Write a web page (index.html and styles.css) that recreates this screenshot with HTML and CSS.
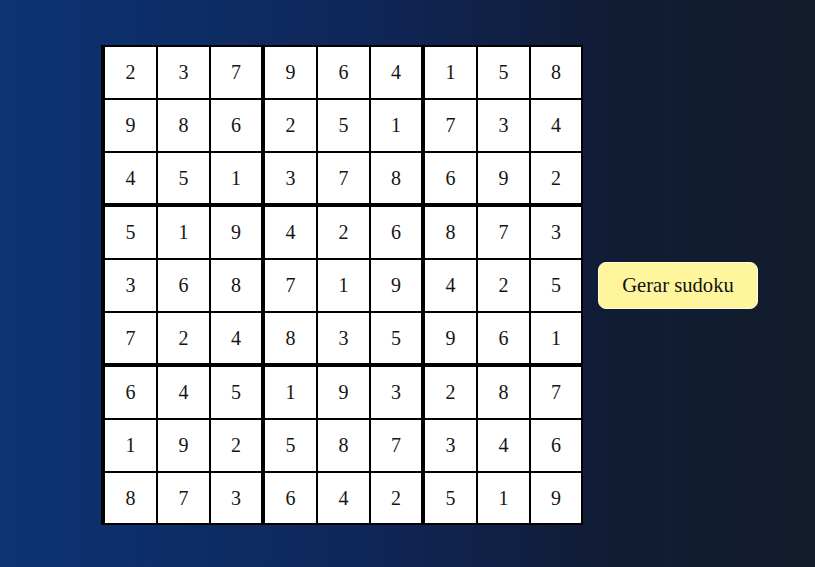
FILE: index.html
```html
<!DOCTYPE html>
<html lang="pt">
<head>
<meta charset="utf-8">
<title>Sudoku</title>
<link rel="stylesheet" href="styles.css">
</head>
<body>
<main class="page">
  <table class="board">
    <tbody>
      <tr><td>2</td><td>3</td><td>7</td><td>9</td><td>6</td><td>4</td><td>1</td><td>5</td><td>8</td></tr>
      <tr><td>9</td><td>8</td><td>6</td><td>2</td><td>5</td><td>1</td><td>7</td><td>3</td><td>4</td></tr>
      <tr><td>4</td><td>5</td><td>1</td><td>3</td><td>7</td><td>8</td><td>6</td><td>9</td><td>2</td></tr>
      <tr><td>5</td><td>1</td><td>9</td><td>4</td><td>2</td><td>6</td><td>8</td><td>7</td><td>3</td></tr>
      <tr><td>3</td><td>6</td><td>8</td><td>7</td><td>1</td><td>9</td><td>4</td><td>2</td><td>5</td></tr>
      <tr><td>7</td><td>2</td><td>4</td><td>8</td><td>3</td><td>5</td><td>9</td><td>6</td><td>1</td></tr>
      <tr><td>6</td><td>4</td><td>5</td><td>1</td><td>9</td><td>3</td><td>2</td><td>8</td><td>7</td></tr>
      <tr><td>1</td><td>9</td><td>2</td><td>5</td><td>8</td><td>7</td><td>3</td><td>4</td><td>6</td></tr>
      <tr><td>8</td><td>7</td><td>3</td><td>6</td><td>4</td><td>2</td><td>5</td><td>1</td><td>9</td></tr>
    </tbody>
  </table>
  <button class="generate" type="button">Gerar sudoku</button>
</main>
</body>
</html>
```
FILE: styles.css
```css
html, body {
  margin: 0;
  padding: 0;
  height: 100%;
}

body {
  background: linear-gradient(to right, #0c3473, #0f2659 45%, #111c34 75%, #131c2c);
  font-family: "Liberation Serif", "Times New Roman", serif;
}

.page {
  display: flex;
  align-items: center;
  gap: 15px;
  padding: 45px 0 0 101px;
}

.board {
  border-collapse: separate;
  border-spacing: 0;
  border: 1px solid #000;
  background: #fff;
}

.board td {
  box-sizing: border-box;
  width: 53px;
  height: 53px;
  border: 1px solid #000;
  padding: 0;
  text-align: center;
  vertical-align: middle;
  font-size: 20px;
  color: #151515;
  background: #fff;
}

.board td:first-child {
  border-left-width: 3px;
  width: 55px;
}

.board td:nth-child(3),
.board td:nth-child(6) {
  border-right-width: 3px;
  width: 54px;
}

.board td:last-child {
  width: 52px;
}

.board tr:nth-child(3) td,
.board tr:nth-child(6) td {
  border-bottom-width: 3px;
  height: 54px;
}

.board tr:last-child td {
  height: 52px;
}

.generate {
  width: 160px;
  height: 47px;
  background: #fff59d;
  border: 1px solid #fffbe0;
  border-radius: 8px;
  font-family: "Liberation Serif", "Times New Roman", serif;
  font-size: 20.6px;
  color: #111;
  padding: 0;
  cursor: pointer;
}
```
